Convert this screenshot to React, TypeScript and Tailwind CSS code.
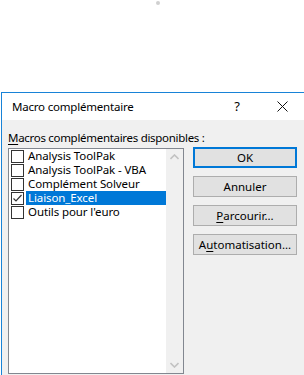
import * as React from "react"

const items = [
  { label: "Analysis ToolPak", checked: false },
  { label: "Analysis ToolPak - VBA", checked: false },
  { label: "Complément Solveur", checked: false },
  { label: "Liaison_Excel", checked: true },
  { label: "Outils pour l'euro", checked: false },
]

function Check({ checked, focus }: { checked: boolean; focus?: boolean }) {
  return (
    <div className={focus ? "outline outline-1 outline-dotted outline-[#333] -outline-offset-1" : ""}>
      <div className="size-[13px] border border-[#333] bg-white flex items-center justify-center">
        {checked && (
          <svg width="11" height="11" viewBox="0 0 11 11">
            <path d="M1.5 5.5 L4 8 L9.5 2" fill="none" stroke="#333" strokeWidth="1.2" />
          </svg>
        )}
      </div>
    </div>
  )
}

function Btn({ children, primary }: { children: React.ReactNode; primary?: boolean }) {
  return (
    <div
      className={
        "h-[21px] w-[104px] flex items-center justify-center bg-[#e1e1e1] text-[11.5px] text-black " +
        (primary ? "border-2 border-[#0078d7]" : "border border-[#adadad]")
      }
    >
      {children}
    </div>
  )
}

export default function App() {
  return (
    <div className="w-[304px] h-[375px] bg-white overflow-hidden" style={{ fontFamily: '"Noto Sans", sans-serif' }}>
      <div className="h-[92px] flex justify-center pt-[1px]">
        <div className="ml-[12px] size-[4px] rounded-full bg-[#d0d0d0]" />
      </div>
      <div className="ml-[1px] border-l border-t border-[#1883d7] h-[283px] flex flex-col">
        <div className="h-[27px] bg-white flex items-center pl-[10px] text-[11.5px] text-black">
          <span className="tracking-[-0.2px]">Macro complémentaire</span>
          <span className="ml-auto mr-[37px] text-[13px]">?</span>
          <svg width="11" height="11" viewBox="0 0 11 11" className="mr-[16px]">
            <path d="M0.5 0.5 L10.5 10.5 M10.5 0.5 L0.5 10.5" stroke="#111" strokeWidth="1" />
          </svg>
        </div>
        <div className="flex-1 bg-[#f0f0f0] pl-[6px] pt-[9px] text-[11.5px] text-black">
          <div className="h-[18px] leading-[18px] tracking-[-0.3px]">
            <span className="underline underline-offset-2">M</span>acros complémentaires disponibles :
          </div>
          <div className="flex gap-[9px] mt-[1px]">
            <div className="w-[176px] h-[226px] border border-[#828790] bg-white flex">
              <div className="flex-1 pl-[2px]">
                {items.map((it) => (
                  <div key={it.label} className="h-[14px] flex items-center">
                    <Check checked={it.checked} focus={it.checked} />
                    <div
                      className={
                        "ml-[2px] flex-1 h-[14px] leading-[14px] pl-[2px] tracking-[-0.1px] " +
                        (it.checked ? "bg-[#0078d7] text-white" : "")
                      }
                    >
                      {it.label}
                    </div>
                  </div>
                ))}
              </div>
              <div className="w-[17px] bg-[#f0f0f0] flex flex-col items-center justify-between py-[5px]">
                <svg width="9" height="6" viewBox="0 0 9 6">
                  <path d="M0.5 5 L4.5 1 L8.5 5" fill="none" stroke="#c2c2c2" strokeWidth="1.6" />
                </svg>
                <svg width="9" height="6" viewBox="0 0 9 6">
                  <path d="M0.5 1 L4.5 5 L8.5 1" fill="none" stroke="#c2c2c2" strokeWidth="1.6" />
                </svg>
              </div>
            </div>
            <div className="flex flex-col gap-[8px] -mt-[1px]">
              <Btn primary>OK</Btn>
              <Btn>Annuler</Btn>
              <Btn>
                <span>
                  <span className="underline underline-offset-2">P</span>arcourir...
                </span>
              </Btn>
              <Btn>
                <span>
                  A<span className="underline underline-offset-2">u</span>tomatisation...
                </span>
              </Btn>
            </div>
          </div>
        </div>
      </div>
    </div>
  )
}
